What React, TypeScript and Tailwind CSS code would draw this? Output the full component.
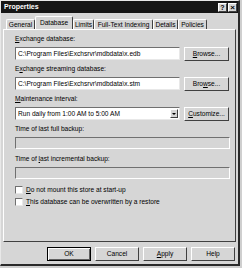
import React from "react";

const U = ({ c }: { c: string }) => <span className="underline underline-offset-[1px]">{c}</span>;

function Label({ children }: { children: React.ReactNode }) {
  return <div className="h-[8px] leading-[8px] text-[6.6px] text-black whitespace-nowrap">{children}</div>;
}

function Btn({ children, w = "w-[44px]", bold = false }: { children: React.ReactNode; w?: string; bold?: boolean }) {
  return (
    <div className={`${w} h-[14px] flex items-center justify-center text-[6.6px] leading-[8px] text-black bg-[#d6d6d6] border ${bold ? "border-black shadow-[inset_1px_1px_0_#ffffff,inset_-1px_-1px_0_#606060]" : "border-t-white border-l-white border-r-[#404040] border-b-[#404040]"}`}>
      <span className="whitespace-nowrap">{children}</span>
    </div>
  );
}

function Input({ text }: { text: string }) {
  return (
    <div className="w-[165px] h-[13px] bg-white border border-t-[#707070] border-l-[#707070] border-r-[#e8e8e8] border-b-[#e8e8e8] flex items-center pl-[2px] text-[6.6px] leading-[8px] text-black whitespace-nowrap overflow-hidden">
      {text}
    </div>
  );
}

function Field() {
  return <div className="w-[215px] h-[12px] bg-[#d6d6d6] border border-t-[#707070] border-l-[#707070] border-r-white border-b-white" />;
}

function Check({ children }: { children: React.ReactNode }) {
  return (
    <div className="flex items-center h-[8px]">
      <div className="w-[8px] h-[8px] bg-white border border-t-[#707070] border-l-[#707070] border-r-[#e8e8e8] border-b-[#e8e8e8]" />
      <div className="ml-[3px] text-[6.6px] leading-[8px] text-black whitespace-nowrap">{children}</div>
    </div>
  );
}

function Tab({ label, w, active = false }: { label: string; w: string; active?: boolean }) {
  return (
    <div
      className={`${w} ${active ? "h-[13px] mt-0 z-10" : "h-[10px] mt-[3px]"} bg-[#d6d6d6] border-t border-l border-r border-t-white border-l-white border-r-[#404040] rounded-t-[2px] flex items-center justify-center text-[6.6px] leading-[8px] text-black whitespace-nowrap`}
    >
      {label}
    </div>
  );
}

function Group({ label, children }: { label: React.ReactNode; children: React.ReactNode }) {
  return (
    <div className="h-[30px] flex flex-col">
      <Label>{label}</Label>
      <div className="flex items-start mt-[4px]">{children}</div>
    </div>
  );
}

export default function App() {
  return (
    <div className="w-[242px] h-[268px] bg-[#cfcfcf] overflow-hidden" style={{ fontFamily: '"Liberation Sans", Arial, sans-serif' }}>
      <div className="w-[240px] h-[266px] bg-[#d6d6d6] border-l border-t border-l-[#e8e8e8] border-t-[#e8e8e8] border-r-2 border-b-2 border-r-[#2a2a2a] border-b-[#2a2a2a] flex flex-col">
        {/* title bar */}
        <div className="h-[12px] bg-[#161616] flex items-center justify-between pl-[3px] pr-[1px]">
          <span className="text-white font-bold text-[7px] leading-[8px]">Properties</span>
          <div className="flex gap-[1px]">
            <div className="w-[9px] h-[9px] bg-[#d6d6d6] border border-t-white border-l-white border-r-[#404040] border-b-[#404040] flex items-center justify-center text-[7px] font-bold leading-[7px]">?</div>
            <div className="w-[9px] h-[9px] bg-[#d6d6d6] border border-t-white border-l-white border-r-[#404040] border-b-[#404040] flex items-center justify-center text-[8px] font-bold leading-[7px]">×</div>
          </div>
        </div>
        {/* tabs */}
        <div className="flex items-start pl-[5px] mt-[3px] h-[13px] relative z-10">
          <Tab label="General" w="w-[29px]" />
          <Tab label="Database" w="w-[38px]" active />
          <Tab label="Limits" w="w-[21px]" />
          <Tab label="Full-Text Indexing" w="w-[59px]" />
          <Tab label="Details" w="w-[25px]" />
          <Tab label="Policies" w="w-[29px]" />
        </div>
        {/* panel */}
        <div className="mx-[2px] h-[213px] border border-t-white border-l-white border-r-[#404040] border-b-[#404040] pl-[11px] pt-[5px] flex flex-col">
          <Group label={<><U c="E" />xchange database:</>}>
            <Input text="C:\Program Files\Exchsrvr\mdbdata\x.edb" />
            <div className="ml-[4px]"><Btn w="w-[45px]"><U c="B" />rowse...</Btn></div>
          </Group>
          <Group label={<>E<U c="x" />change streaming database:</>}>
            <Input text="C:\Program Files\Exchsrvr\mdbdata\x.stm" />
            <div className="ml-[4px]"><Btn w="w-[45px]">Bro<U c="w" />se...</Btn></div>
          </Group>
          <Group label={<><U c="M" />aintenance interval:</>}>
            <div className="w-[165px] h-[13px] bg-white border border-t-[#707070] border-l-[#707070] border-r-[#e8e8e8] border-b-[#e8e8e8] flex items-center justify-between pl-[2px] pr-[1px] text-[6.6px] leading-[8px] text-black whitespace-nowrap">
              <span>Run daily from 1:00 AM to 5:00 AM</span>
              <div className="w-[8px] h-[9px] bg-[#d6d6d6] border border-t-white border-l-white border-r-[#404040] border-b-[#404040] flex items-center justify-center">
                <div className="w-0 h-0 border-l-[2px] border-r-[2px] border-t-[2px] border-l-transparent border-r-transparent border-t-black" />
              </div>
            </div>
            <div className="ml-[4px]"><Btn w="w-[45px]"><U c="C" />ustomize...</Btn></div>
          </Group>
          <Group label="Time of last full backup:">
            <Field />
          </Group>
          <Group label={<>Time of <U c="l" />ast incremental backup:</>}>
            <Field />
          </Group>
          <div className="mt-[1px]"><Check><U c="D" />o not mount this store at start-up</Check></div>
          <div className="mt-[4px]"><Check><U c="T" />his database can be overwritten by a restore</Check></div>
        </div>
        {/* buttons */}
        <div className="flex justify-end gap-[4px] pr-[3px] mt-[5px]">
          <Btn bold>OK</Btn>
          <Btn>Cancel</Btn>
          <Btn><U c="A" />pply</Btn>
          <Btn>Help</Btn>
        </div>
      </div>
    </div>
  );
}
